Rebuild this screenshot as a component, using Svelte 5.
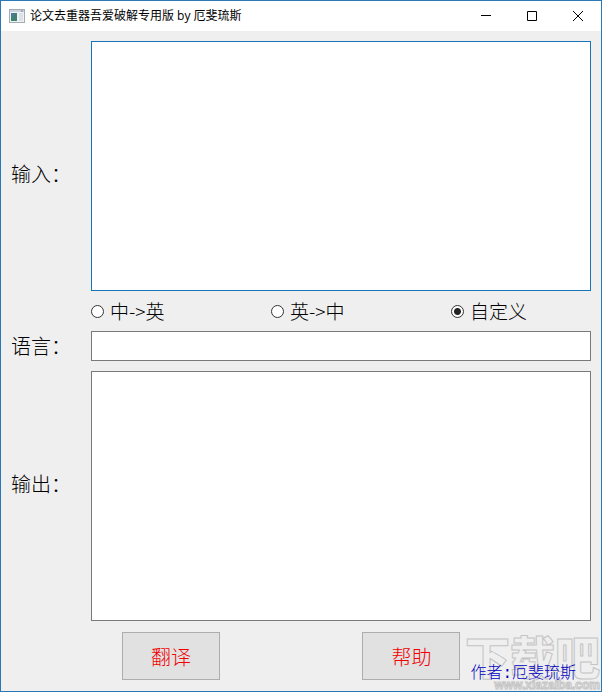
<script lang="ts">
    const modes = [
        { value: "zh-en", text: "中->英" },
        { value: "en-zh", text: "英->中" },
        { value: "custom", text: "自定义" },
    ];

    let mode = "custom";
    let input = "";
    let language = "";
    let output = "";
</script>

<div class="window">
    <header class="titlebar">
        <svg class="app-icon" width="16" height="14" viewBox="0 0 16 14">
            <rect x="0.5" y="0.5" width="15" height="13" fill="#eef1f4" stroke="#a3abb3" />
            <rect x="1" y="1" width="14" height="2" fill="#c9d3dd" />
            <rect x="2" y="4" width="6" height="8" fill="#3f8270" />
            <rect x="2" y="4" width="3" height="4" fill="#4f77a0" />
            <rect x="10" y="4" width="4" height="8" fill="#dde1e5" />
            <path d="M12 2h2" stroke="#71879c" />
        </svg>
        <h1>论文去重器吾爱破解专用版 by 厄斐琉斯</h1>
        <button class="control" aria-label="最小化">
            <svg width="10" height="10" viewBox="0 0 10 10"><path d="M0 4.5h10" /></svg>
        </button>
        <button class="control" aria-label="最大化">
            <svg width="10" height="10" viewBox="0 0 10 10"><path d="M.5.5h9v9h-9z" /></svg>
        </button>
        <button class="control" aria-label="关闭">
            <svg width="10" height="10" viewBox="0 0 10 10"><path d="M0 0l10 10M10 0L0 10" /></svg>
        </button>
    </header>

    <main>
        <label class="caption caption-input" for="input">输入：</label>
        <textarea id="input" class="active" bind:value={input}></textarea>

        <div class="modes" role="radiogroup" aria-label="翻译方向">
            {#each modes as item (item.value)}
                <label class="mode">
                    <input type="radio" name="mode" value={item.value} bind:group={mode} />
                    {item.text}
                </label>
            {/each}
        </div>

        <label class="caption" for="language">语言：</label>
        <input id="language" class="language" type="text" bind:value={language} />

        <label class="caption caption-output" for="output">输出：</label>
        <textarea id="output" bind:value={output}></textarea>
    </main>

    <footer>
        <button class="action">翻译</button>
        <button class="action">帮助</button>
        <span class="author">作者:厄斐琉斯</span>
    </footer>

    <div class="watermark">
        <span class="watermark-name">下载吧</span>
        <span class="watermark-site">www.xiazaiba.com</span>
    </div>
</div>

<style>
    :global(body) {
        margin: 0;
    }

    .window {
        position: relative;
        display: flex;
        flex-direction: column;
        box-sizing: border-box;
        min-height: 100vh;
        overflow: hidden;
        border: 1px solid #2a78b5;
        background: #efefef;
        color: #000;
        font-family: "Noto Sans CJK SC", sans-serif;
    }

    .titlebar {
        display: flex;
        align-items: center;
        height: 30px;
        padding-left: 8px;
        background: #fff;
    }

    .app-icon {
        margin-right: 5px;
    }

    h1 {
        flex: 1;
        margin: 0;
        font: 12px/16px "Open Sans", "Noto Sans CJK SC", sans-serif;
        white-space: nowrap;
    }

    .control {
        display: flex;
        align-items: center;
        justify-content: center;
        width: 46px;
        height: 28px;
        padding: 0;
        border: 0;
        background: transparent;
    }

    .control path {
        fill: none;
        stroke: #000;
    }

    main {
        flex: 1;
        display: grid;
        grid-template-columns: 80px 1fr;
        grid-template-rows: 1fr 40px 30px 10px 1fr;
        padding: 10px 10px 0;
    }

    .caption {
        align-self: center;
        font-size: 20px;
        font-weight: 300;
        line-height: 28px;
        white-space: nowrap;
    }

    .caption-input {
        padding-top: 16px;
    }

    .caption-output {
        grid-row: 5;
        padding-bottom: 24px;
    }

    textarea,
    .language {
        box-sizing: border-box;
        width: 100%;
        margin: 0;
        padding: 4px;
        border: 1px solid #7a7a7a;
        border-radius: 0;
        outline: 0;
        background: #fff;
        font: inherit;
        font-size: 18px;
        resize: none;
    }

    textarea {
        min-height: 120px;
    }

    #output {
        grid-row: 5;
    }

    textarea.active {
        border-color: #1874b8;
    }

    .modes {
        grid-column: 2;
        display: flex;
        align-items: center;
    }

    .mode {
        display: flex;
        align-items: center;
        flex: 0 0 36%;
        font-size: 19px;
        font-weight: 300;
        line-height: 24px;
        white-space: nowrap;
    }

    .mode input {
        appearance: none;
        box-sizing: border-box;
        width: 13px;
        height: 13px;
        margin: 0 6px 0 0;
        border: 1px solid #333;
        border-radius: 50%;
        background: #fff;
    }

    .mode input:checked {
        background: radial-gradient(circle, #222 3px, #fff 4px);
    }

    footer {
        position: relative;
        z-index: 1;
        display: grid;
        grid-template-columns: 1fr auto auto;
        column-gap: 10px;
        align-items: start;
        padding: 11px 25px 11px 121px;
    }

    .action {
        width: 98px;
        height: 48px;
        padding: 0;
        border: 1px solid #adadad;
        background: #e1e1e1;
        color: #f00000;
        font: inherit;
        font-size: 20px;
        font-weight: 300;
    }

    .author {
        height: 16px;
        padding-top: 32px;
        color: #0000c0;
        font-size: 16px;
        font-weight: 300;
        font-family: "Liberation Mono", "Noto Sans CJK SC", monospace;
        line-height: 20px;
        white-space: nowrap;
    }

    .watermark {
        position: absolute;
        right: 1px;
        bottom: 0;
        display: flex;
        flex-direction: column;
        align-items: flex-end;
        color: #efefef;
        font-weight: 900;
        white-space: nowrap;
        pointer-events: none;
        -webkit-text-stroke: 1px #c4c4c4;
    }

    .watermark-name {
        font-size: 45px;
        line-height: 46px;
    }

    .watermark-site {
        font-family: "Liberation Sans", sans-serif;
        font-size: 12px;
        line-height: 12px;
    }
</style>
